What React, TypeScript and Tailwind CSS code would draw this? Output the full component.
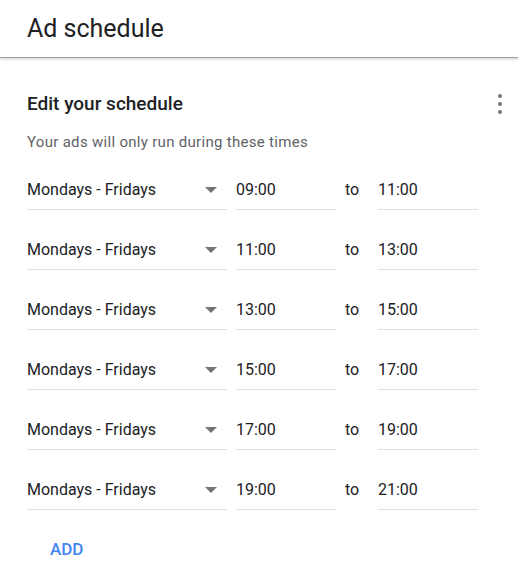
const rows = [
  ["09:00", "11:00"],
  ["11:00", "13:00"],
  ["13:00", "15:00"],
  ["15:00", "17:00"],
  ["17:00", "19:00"],
  ["19:00", "21:00"],
];

function Row({ from, to }: { from: string; to: string }) {
  return (
    <div className="flex items-start h-[60px]">
      <div className="w-[200px] flex items-center justify-between border-b border-[#e0e0e0] pb-[7px] h-[32px]">
        <span className="text-[16px] leading-6 text-[#202124]">Mondays - Fridays</span>
        <svg width="12" height="6" viewBox="0 0 12 6" className="mr-[10px]">
          <path d="M0 0 L12 0 L6 6 Z" fill="#757575" />
        </svg>
      </div>
      <div className="ml-[9px] w-[100px] border-b border-[#e0e0e0] pb-[7px] h-[32px]">
        <span className="text-[16px] leading-6 text-[#202124]">{from}</span>
      </div>
      <div className="ml-[9px] w-[33px] text-[16px] leading-6 text-[#202124]">to</div>
      <div className="w-[100px] border-b border-[#e0e0e0] pb-[7px] h-[32px]">
        <span className="text-[16px] leading-6 text-[#202124]">{to}</span>
      </div>
    </div>
  );
}

export default function App() {
  return (
    <div className="w-[518px] h-[577px] bg-white font-['Roboto',sans-serif] overflow-hidden">
      <div className="h-[58px] flex items-center px-[27px] border-b border-[#9e9e9e] shadow-[0_1px_3px_rgba(0,0,0,0.2)]">
        <h1 className="text-[25px] text-[#202124]">Ad schedule</h1>
      </div>
      <div className="pl-[27px] pt-[34px]">
        <div className="flex items-center justify-between h-6">
          <h2 className="text-[19px] font-medium text-[#202124]">Edit your schedule</h2>
          <div className="flex flex-col gap-[4px] items-center w-4 mr-[10px]">
            <span className="w-1 h-1 rounded-full bg-[#757575]" />
            <span className="w-1 h-1 rounded-full bg-[#757575]" />
            <span className="w-1 h-1 rounded-full bg-[#757575]" />
          </div>
        </div>
        <p className="mt-[16px] text-[15px] leading-5 text-[#5f6368] tracking-[0.3px]">
          Your ads will only run during these times
        </p>
        <div className="mt-[26px]">
          {rows.map(([f, t], i) => (
            <Row key={i} from={f} to={t} />
          ))}
        </div>
        <button className="ml-[23px] mt-[-5px] text-[17px] font-medium text-[#4285f4] leading-6">ADD</button>
      </div>
    </div>
  );
}
